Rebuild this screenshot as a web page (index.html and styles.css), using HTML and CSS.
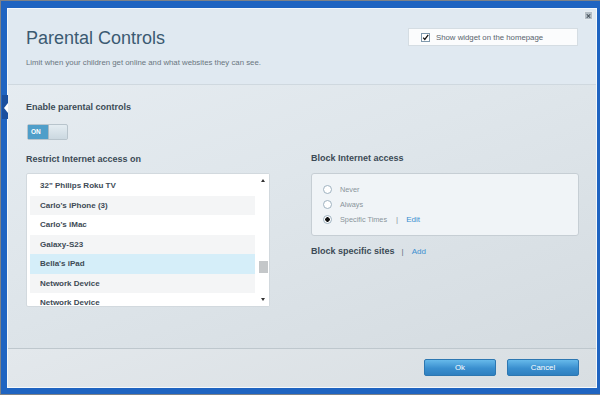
FILE: index.html
```html
<!DOCTYPE html>
<html>
	<head>
		<meta charset="UTF-8">
		<title>Parental Controls</title>
		<link rel="stylesheet" href="styles.css">
	</head>
	<body>
		<div class="frame">
			<!--left menu marker-->
			<div class="notch"></div>
			<div class="dialog">
				<div class="head">
					<div class="head-text">
						<h1 class="title">Parental Controls</h1>
						<p class="sub">Limit when your children get online and what websites they can see.</p>
					</div>
					<label class="widget">
						<span class="check">
							<svg width="9" height="9" viewBox="0 0 9 9"><path d="M1.5 4.6 L3.6 7 L8 1.2" fill="none" stroke="#111" stroke-width="1.6"/></svg>
						</span>
						Show widget on the homepage
					</label>
					<span class="close">
						<svg width="8" height="8" viewBox="0 0 8 8"><path d="M2 2 L6 6 M6 2 L2 6" stroke="#3d4850" stroke-width="1.2"/></svg>
					</span>
				</div>

				<div class="main">
					<div class="col-left">
						<h2 class="label">Enable parental controls</h2>
						<div class="toggle">
							<span class="toggle-on">ON</span>
							<span class="toggle-knob"></span>
						</div>
						<h2 class="label">Restrict Internet access on</h2>
						<div class="list">
							<ul class="devices">
								<li>32" Philips Roku TV</li>
								<li class="alt">Carlo's iPhone (3)</li>
								<li>Carlo's iMac</li>
								<li class="alt">Galaxy-S23</li>
								<li class="sel">Bella's iPad</li>
								<li class="alt">Network Device</li>
								<li>Network Device</li>
							</ul>
							<div class="scroll">
								<span class="arrow up"></span>
								<span class="thumb"></span>
								<span class="arrow down"></span>
							</div>
						</div>
					</div>

					<div class="col-right">
						<h2 class="label">Block Internet access</h2>
						<div class="radios">
							<div class="radio-row"><span class="radio"></span>Never</div>
							<div class="radio-row"><span class="radio"></span>Always</div>
							<div class="radio-row"><span class="radio on"></span>Specific Times<span class="pipe">|</span><a href="#" class="link">Edit</a></div>
						</div>
						<div class="sites">
							<h2 class="label">Block specific sites</h2>
							<span class="pipe">|</span>
							<a href="#" class="link">Add</a>
						</div>
					</div>
				</div>

				<div class="foot">
					<button class="btn">Ok</button>
					<button class="btn">Cancel</button>
				</div>
			</div>
		</div>
	</body>
</html>
```

FILE: styles.css
```css
* {
	margin: 0;
	padding: 0;
	box-sizing: border-box;
}

body {
	width: 600px;
	height: 395px;
	overflow: hidden;
	font-family: "Liberation Sans", Arial, sans-serif;
	background: #7d8288;
}

.frame {
	position: relative;
	width: 600px;
	height: 393px;
	margin: 1px 0 0 1px;
	padding: 7px 3px 5px 6px;
	background: #1f64c1;
}

/*白色小三角*/
.notch {
	position: absolute;
	left: 1px;
	top: 94px;
	width: 6px;
	height: 24px;
	background: #1a4f9e;
}

.notch:after {
	content: "";
	position: absolute;
	right: 0;
	top: 8px;
	border-style: solid;
	border-width: 5px 4px 5px 0;
	border-color: transparent #fff transparent transparent;
}

.dialog {
	display: flex;
	flex-direction: column;
	width: 590px;
	height: 380px;
	border: 1px solid #f4f8fb;
	background: linear-gradient(160deg, #e8eef3 0%, #dfe6eb 45%, #d3dadf 100%);
}

.head {
	position: relative;
	display: flex;
	justify-content: space-between;
	height: 76px;
	padding: 18px 18px 0 18px;
	background: #e0e9f1;
	border-bottom: 1px solid #cfd8df;
}

.title {
	font-size: 18px;
	font-weight: normal;
	line-height: 22px;
	color: #3b5a72;
}

.sub {
	margin-top: 9px;
	font-size: 7.8px;
	color: #6a7680;
}

.widget {
	display: flex;
	align-items: center;
	align-self: flex-start;
	width: 170px;
	height: 18px;
	margin-top: 1px;
	padding-left: 12px;
	background: #fbfcfd;
	border: 1px solid #d5dde3;
	font-size: 7.8px;
	color: #58636c;
}

.check {
	display: flex;
	align-items: center;
	justify-content: center;
	width: 9px;
	height: 9px;
	margin-right: 6px;
	background: #fff;
	border: 1px solid #7f99ad;
}

.close {
	position: absolute;
	right: 3px;
	top: 2px;
	display: flex;
	align-items: center;
	justify-content: center;
	width: 9px;
	height: 9px;
	background: #b4bec6;
	border: 1px solid #e6ecf0;
}

.main {
	display: flex;
	flex: 1;
	padding: 0 17px 0 18px;
	border-bottom: 1px solid #bec7cd;
}

.label {
	font-size: 9px;
	font-weight: bold;
	color: #3c4a56;
	line-height: 11px;
}

.col-left {
	width: 244px;
	padding-top: 17px;
}

.toggle {
	display: flex;
	width: 41px;
	height: 16px;
	margin: 11px 0 14px 1px;
	border: 1px solid #b8c4cc;
	border-radius: 2px;
	background: #d5e1e8;
}

.toggle-on {
	width: 20px;
	background: #4f9ec9;
	color: #fff;
	font-size: 6.5px;
	font-weight: bold;
	line-height: 14px;
	padding-left: 3px;
}

.toggle-knob {
	flex: 1;
	background: linear-gradient(#e4edf2, #cbd8e0);
	border-left: 1px solid #aab8c1;
	border-radius: 0 2px 2px 0;
}

.list {
	display: flex;
	height: 134px;
	margin-top: 8px;
	background: #fff;
	border: 1px solid #d2d9de;
	border-radius: 2px;
}

.devices {
	flex: 1;
	list-style: none;
	padding: 2px 3px 0 3px;
	overflow: hidden;
}

.devices li {
	height: 19.5px;
	padding-left: 10px;
	font-size: 8px;
	font-weight: bold;
	line-height: 19.5px;
	color: #3d4a55;
}

.devices li.alt {
	background: #f4f5f6;
}

.devices li.sel {
	background: #d5eef9;
}

.scroll {
	position: relative;
	width: 11px;
	background: #fff;
}

.arrow {
	position: absolute;
	left: 3px;
	border-style: solid;
	border-color: transparent;
}

.arrow.up {
	top: 5px;
	border-width: 0 2.5px 3px 2.5px;
	border-bottom-color: #333;
}

.arrow.down {
	bottom: 5px;
	border-width: 3px 2.5px 0 2.5px;
	border-top-color: #333;
}

.thumb {
	position: absolute;
	left: 1px;
	top: 87px;
	width: 9px;
	height: 12px;
	background: #c4c7c9;
}

.col-right {
	flex: 1;
	margin-left: 41px;
	padding-top: 68px;
}

.radios {
	height: 63px;
	margin-top: 9px;
	padding: 8px 0 0 11px;
	background: #f0f4f7;
	border: 1px solid #c6ced4;
	border-radius: 3px;
}

.radio-row {
	display: flex;
	align-items: center;
	height: 15.2px;
	font-size: 7.3px;
	color: #8a949b;
}

.radio {
	width: 9px;
	height: 9px;
	margin-right: 8px;
	border: 1px solid #9fb2c0;
	border-radius: 50%;
	background: #fff;
}

.radio.on {
	background: radial-gradient(circle, #111 0, #111 2px, #fff 2.5px);
}

.pipe {
	margin: 0 8px 0 9px;
	font-size: 8px;
	color: #8a949b;
}

.link {
	font-size: 8px;
	color: #3b8fd0;
	text-decoration: none;
}

.sites {
	display: flex;
	align-items: center;
	margin-top: 10px;
}

.sites .pipe {
	margin: 0 8px 0 7px;
	color: #606c75;
}

.foot {
	display: flex;
	justify-content: flex-end;
	gap: 11px;
	height: 38px;
	padding: 10px 17px 0 0;
	background: linear-gradient(160deg, #e3e8ec, #d8dee2);
}

.btn {
	width: 72px;
	height: 17px;
	border: 1px solid #2d77b1;
	border-radius: 2px;
	background: linear-gradient(#66b9ea, #3a8fcf 55%, #2f80c0);
	color: #fff;
	font-family: "Liberation Sans", Arial, sans-serif;
	font-size: 7.8px;
}
```
